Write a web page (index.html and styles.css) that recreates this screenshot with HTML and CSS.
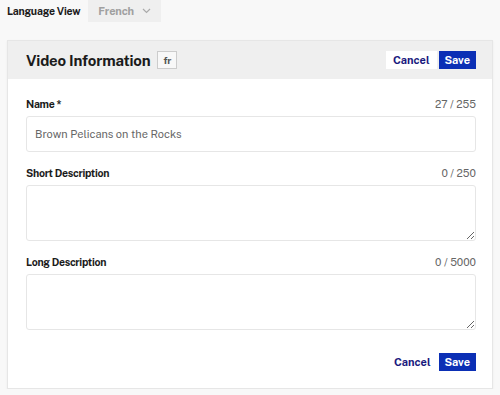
FILE: index.html
```html
<!DOCTYPE html>
<html lang="en">
<head>
  <meta charset="UTF-8">
  <title>Video Information</title>
  <link rel="stylesheet" href="styles.css">
</head>
<body>
  <div class="lang-bar">
    <span class="lang-label">Language View</span>
    <div class="lang-select">French
      <svg width="9" height="6" viewBox="0 0 9 6"><path d="M1 1l3.5 3.5 3.5-3.5" fill="none" stroke="#aaa" stroke-width="1.2"/></svg>
    </div>
  </div>

  <div class="card">
    <div class="card-header">
      <h1>Video Information <span class="badge">fr</span></h1>
      <div class="actions">
        <button class="btn-cancel boxed">Cancel</button>
        <button class="btn-save">Save</button>
      </div>
    </div>
    <div class="card-body">
      <div class="field">
        <div class="field-top"><label>Name *</label><span class="count">27 / 255</span></div>
        <input class="text-input" type="text" value="Brown Pelicans on the Rocks">
      </div>
      <div class="field">
        <div class="field-top"><label>Short Description</label><span class="count">0 / 250</span></div>
        <textarea class="text-area"></textarea>
      </div>
      <div class="field">
        <div class="field-top"><label>Long Description</label><span class="count">0 / 5000</span></div>
        <textarea class="text-area"></textarea>
      </div>
      <div class="actions bottom">
        <button class="btn-cancel">Cancel</button>
        <button class="btn-save">Save</button>
      </div>
    </div>
  </div>
</body>
</html>
```

FILE: styles.css
```css
body { margin: 0; padding: 0 7px; background-color: #f8f8f8; font-family: "Public Sans", "Liberation Sans", Arial, sans-serif; color: #1b1b1b; }
.lang-bar { display: flex; align-items: center; height: 22px; }
.lang-label { font-size: 10.5px; font-weight: bold; margin-right: 8px; letter-spacing: -0.2px; }
.lang-select {
  display: flex; align-items: center; gap: 8px; height: 22px; padding: 0 10px;
  background-color: #efefef; color: #a0a0a0; font-size: 11px; font-weight: bold; letter-spacing: -0.2px;
}
.card {
  margin-top: 18px; width: 486px; box-sizing: border-box; background: #fff;
  border: 1px solid #e6e6e6; box-shadow: 0 1px 2px rgba(0,0,0,0.06);
}
.card-header {
  display: flex; align-items: center; justify-content: space-between;
  height: 38px; padding: 0 16px 0 18px; background-color: #efefef;
}
.card-header h1 { margin: 0; font-size: 15px; font-weight: bold; display: flex; align-items: center; gap: 7px; letter-spacing: -0.2px; }
.badge {
  font-size: 10px; font-weight: bold; color: #555; background: #f8f8f8; border: 1px solid #ccc;
  padding: 2px 5px; line-height: 12px; letter-spacing: 0;
}
.actions { display: flex; gap: 2px; align-items: center; }
.actions button { font-family: inherit; font-size: 11px; font-weight: bold; border: none; cursor: pointer; height: 18px; }
.btn-cancel { background: transparent; color: #1a1a7e; padding: 0 6px; }
.btn-cancel.boxed { background: #fff; padding: 0 7px; }
.btn-save { background: #0b2fb5; color: #fff; padding: 0 6px; border: 1px solid #1d3fd0; }
.card-body { padding: 19px 16px 17px 18px; }
.field { margin-bottom: 15px; }
.field-top { display: flex; justify-content: space-between; align-items: baseline; margin-bottom: 6px; }
.field-top label { font-size: 10.5px; font-weight: bold; letter-spacing: -0.3px; }
.count { font-size: 10.5px; color: #666; }
.text-input, .text-area {
  display: block; box-sizing: border-box; width: 100%; border: 1px solid #e6e6e6; border-radius: 3px;
  font-family: inherit; background: #fff;
}
.text-input { height: 36px; padding: 0 8px; font-size: 11px; color: #666; }
.text-area { height: 56px; resize: vertical; }
.actions.bottom { justify-content: flex-end; margin-top: 23px; gap: 2px; }
```
